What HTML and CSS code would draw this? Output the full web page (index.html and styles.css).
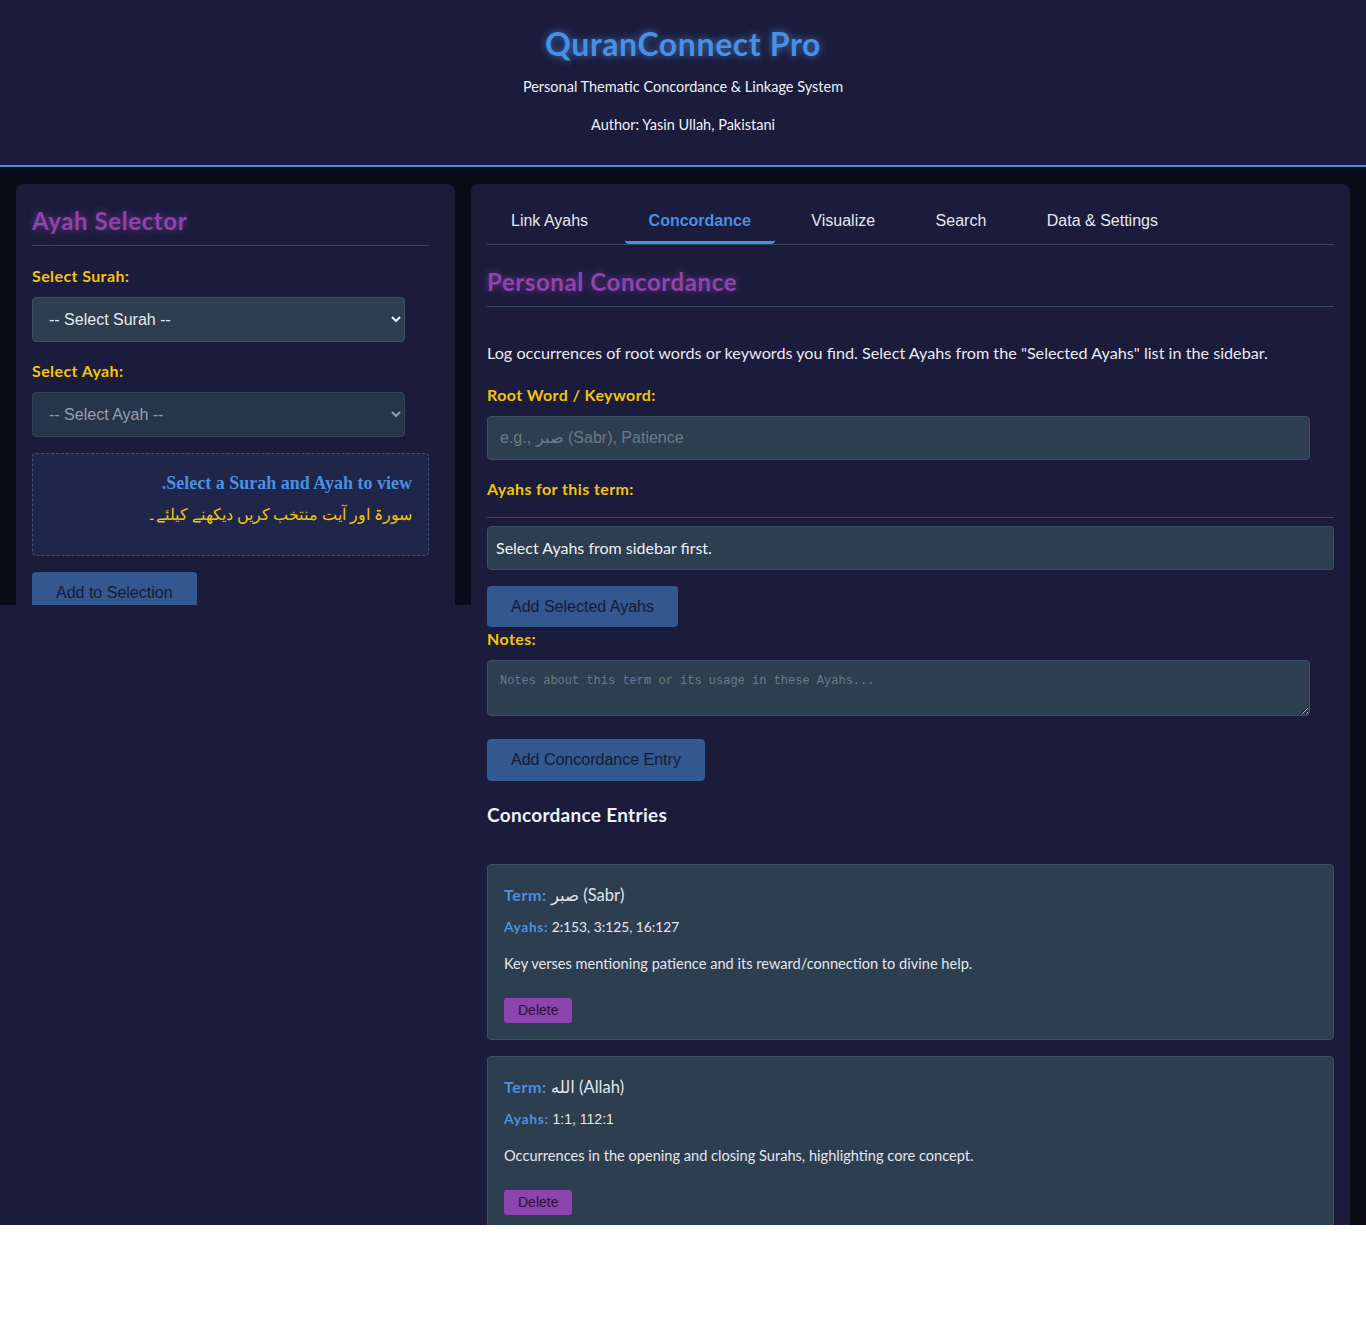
FILE: index.html
```html
<!DOCTYPE html>
<html lang="en">
<head>
<meta charset="utf-8">
<title>QuranConnect Pro</title>
<link rel="stylesheet" href="styles.css">
</head>
<body>
<div class="page">
  <header class="site-header">
    <h1 class="site-title">QuranConnect Pro</h1>
    <p class="tagline">Personal Thematic Concordance &amp; Linkage System</p>
    <p class="author">Author: Yasin Ullah, Pakistani</p>
  </header>

  <div class="layout">
    <aside class="sidebar">
      <h2 class="panel-title sidebar-title">Ayah Selector</h2>
      <div class="form-group first">
        <label class="field-label" for="surah">Select Surah:</label>
        <select id="surah" class="field field-select"><option>-- Select Surah --</option></select>
      </div>
      <div class="form-group last">
        <label class="field-label" for="ayah">Select Ayah:</label>
        <select id="ayah" class="field field-select" disabled><option>-- Select Ayah --</option></select>
      </div>
      <div class="ayah-display" dir="rtl">
        <p class="ayah-en">Select a Surah and Ayah to view.</p>
        <p class="ayah-ur">سورۃ اور آیت منتخب کریں دیکھنے کیلئے۔</p>
      </div>
      <button class="btn">Add to Selection</button>
    </aside>

    <div class="main-wrap">
      <main class="main-card">
        <nav class="tabs">
          <button class="tab">Link Ayahs</button>
          <button class="tab active">Concordance</button>
          <button class="tab">Visualize</button>
          <button class="tab">Search</button>
          <button class="tab">Data &amp; Settings</button>
        </nav>

        <section class="tab-panel">
          <h2 class="panel-title main-title">Personal Concordance</h2>
          <p class="intro">Log occurrences of root words or keywords you find. Select Ayahs from the "Selected Ayahs" list in the sidebar.</p>

          <div class="form-group">
            <label class="field-label" for="term">Root Word / Keyword:</label>
            <input id="term" class="field" type="text" placeholder="e.g., صبر (Sabr), Patience">
          </div>

          <label class="field-label">Ayahs for this term:</label>
          <div class="ayah-list">
            <div class="ayah-empty">Select Ayahs from sidebar first.</div>
          </div>
          <button class="btn btn-add-ayahs">Add Selected Ayahs</button>

          <label class="field-label" for="notes">Notes:</label>
          <textarea id="notes" class="field field-notes" placeholder="Notes about this term or its usage in these Ayahs..."></textarea>

          <button class="btn btn-entry">Add Concordance Entry</button>

          <h3 class="entries-title">Concordance Entries</h3>

          <div class="entry">
            <p class="entry-term"><span class="entry-key">Term:</span> صبر (Sabr)</p>
            <p class="entry-ayahs"><span class="entry-key">Ayahs:</span> 2:153, 3:125, 16:127</p>
            <p class="entry-note">Key verses mentioning patience and its reward/connection to divine help.</p>
            <button class="btn-delete">Delete</button>
          </div>

          <div class="entry">
            <p class="entry-term"><span class="entry-key">Term:</span> الله (Allah)</p>
            <p class="entry-ayahs alt"><span class="entry-key">Ayahs:</span> 1:1, 112:1</p>
            <p class="entry-note">Occurrences in the opening and closing Surahs, highlighting core concept.</p>
            <button class="btn-delete">Delete</button>
          </div>
        </section>
      </main>
    </div>
  </div>
</div>
</body>
</html>
```

FILE: styles.css
```css
html {
  background: #ffffff;
}

body {
  margin: 0;
  font-family: "Lato", "Noto Sans", "DejaVu Sans", sans-serif;
  color: #e4e6ef;
}

.page {
  height: 1225px;
  overflow: hidden;
  background: #1b1b3b;
}

/* Header */
.site-header {
  text-align: center;
  padding: 25px 0 30px;
  border-bottom: 2px solid #4a90e2;
  background: #1b1b3b;
}

.site-title {
  margin: 0;
  font-size: 32px;
  line-height: 38px;
  font-weight: 700;
  letter-spacing: 0.6px;
  color: #4a90e2;
  text-shadow: 0 0 8px rgba(74, 144, 226, 0.8);
}

.tagline {
  margin: 14px 0 0;
  font-size: 14.5px;
  line-height: 20px;
  color: #f0f0f5;
}

.author {
  margin: 18px 0 0;
  font-size: 14.5px;
  line-height: 20px;
  color: #f0f0f5;
}

/* Layout */
.layout {
  display: flex;
  gap: 16px;
  height: 438px;
  padding: 17px 0 0 16px;
  box-sizing: border-box;
  background: #0b0b18;
}

.sidebar {
  flex: none;
  width: 439px;
  box-sizing: border-box;
  padding: 16px 26px 0 16px;
  background: #1b1b3b;
  border-radius: 8px 8px 0 0;
  overflow: hidden;
}

.main-wrap {
  flex: 1;
  align-self: flex-start;
  padding-right: 16px;
  background: #0b0b18;
}

.main-card {
  display: block;
  background: #1b1b3b;
  border-radius: 8px;
  padding: 16px;
}

/* Titles */
.panel-title {
  margin: 0;
  font-size: 24px;
  line-height: 29px;
  font-weight: 700;
  letter-spacing: 0.6px;
  color: #8e44ad;
  text-shadow: 0 0 8px rgba(142, 68, 173, 0.75);
  padding-bottom: 10px;
  border-bottom: 1px solid #34495e;
}

.sidebar-title {
  margin-top: 6px;
}

.main-title {
  margin-top: 22px;
}

/* Forms */
.form-group {
  margin-bottom: 19px;
}

.form-group.first {
  margin-top: 20px;
}

.form-group.last {
  margin-bottom: 16px;
}

.field-label {
  display: block;
  font-size: 16px;
  line-height: 20px;
  font-weight: 700;
  letter-spacing: 0.4px;
  color: #f1c40f;
  margin-bottom: 11px;
}

.field {
  display: block;
  width: calc(100% - 24px);
  box-sizing: border-box;
  background: #2c3e50;
  border: 1px solid #3b4f66;
  border-radius: 4px;
  color: #e6e9f0;
  font-family: "Liberation Sans", Arial, sans-serif;
  font-size: 16px;
  line-height: 18px;
  padding: 12px;
  color-scheme: dark;
}

.field-select {
  height: 45px;
  padding: 0 8px 0 12px;
}

.field-select:disabled {
  opacity: 0.75;
  color: #c2c7d3;
}

.field::placeholder {
  color: #6d7a88;
}

.field-notes {
  height: 56px;
  resize: vertical;
  font-family: "Liberation Mono", "DejaVu Sans Mono", monospace;
  font-size: 12px;
  line-height: 16px;
}

/* Ayah display box */
.ayah-display {
  border: 1px dashed #3d5170;
  border-radius: 4px;
  background: #1f264a;
  padding: 13px 16px 24px;
  font-family: "Liberation Serif", "DejaVu Serif", serif;
}

.ayah-display p {
  margin: 0;
}

.ayah-en {
  font-size: 18px;
  line-height: 32px;
  font-weight: 700;
  color: #4a90e2;
}

.ayah-ur {
  font-size: 15.5px;
  line-height: 32px;
  color: #f1c40f;
}

/* Buttons */
.btn {
  display: inline-block;
  margin-top: 16px;
  padding: 11px 24px;
  border: none;
  border-radius: 4px;
  background: #33578f;
  color: #151b36;
  font-family: "Liberation Sans", Arial, sans-serif;
  font-size: 16px;
  line-height: 20px;
}

.btn-add-ayahs {
  margin-top: 16px;
  margin-bottom: 2px;
  padding: 10px 24px;
  line-height: 21px;
}

.btn-entry {
  margin-top: 23px;
}

/* Tabs */
.tabs {
  display: flex;
  gap: 12.5px;
  border-bottom: 1px solid #34495e;
}

.tab {
  background: none;
  border: none;
  border-bottom: 3px solid transparent;
  border-radius: 4px;
  padding: 11px 24px;
  font-family: "Liberation Sans", Arial, sans-serif;
  font-size: 16px;
  line-height: 19px;
  color: #e6e8f0;
}

.tab.active {
  color: #4a90e2;
  font-weight: 700;
  border-bottom-color: #4a90e2;
}

/* Concordance */
.intro {
  margin: 34px 0 20px;
  font-size: 16.2px;
  line-height: 24px;
  color: #e8eaf2;
}

.ayah-list {
  margin-top: 18px;
  padding-top: 8px;
  border-top: 1px solid #34495e;
}

.ayah-empty {
  background: #2c3e50;
  border: 1px solid #3b4f66;
  border-radius: 4px;
  padding: 10px 8px;
  font-size: 16px;
  line-height: 22px;
  color: #eef0f5;
}

.entries-title {
  margin: 22px 0 37px;
  font-size: 19px;
  line-height: 24px;
  font-weight: 700;
  letter-spacing: 0.3px;
  color: #eef0fa;
}

.entry {
  background: #2c3e50;
  border: 1px solid #3b4f66;
  border-radius: 4px;
  padding: 16px;
  margin-bottom: 16px;
}

.entry p {
  margin: 0;
}

.entry-key {
  color: #4a90e2;
  font-weight: 700;
  letter-spacing: 0.6px;
}

.entry-term {
  font-size: 16.5px;
  line-height: 28px;
}

.entry-term .entry-key {
  font-size: 16px;
}

.entry-ayahs {
  margin-top: 8px !important;
  font-size: 13.8px;
  line-height: 20px;
}

.entry-ayahs.alt {
  font-family: "Liberation Sans", Arial, sans-serif;
  font-size: 14px;
}

.entry-ayahs.alt .entry-key {
  font-family: "Lato", sans-serif;
  font-size: 14px;
}

.entry-note {
  margin-top: 17px !important;
  font-size: 14.6px;
  line-height: 20px;
}

.btn-delete {
  display: inline-block;
  margin-top: 24px;
  padding: 4px 14px;
  border: none;
  border-radius: 3px;
  background: #8e44ad;
  color: #2a1238;
  font-family: "Liberation Sans", Arial, sans-serif;
  font-size: 14px;
  line-height: 17px;
}
```
